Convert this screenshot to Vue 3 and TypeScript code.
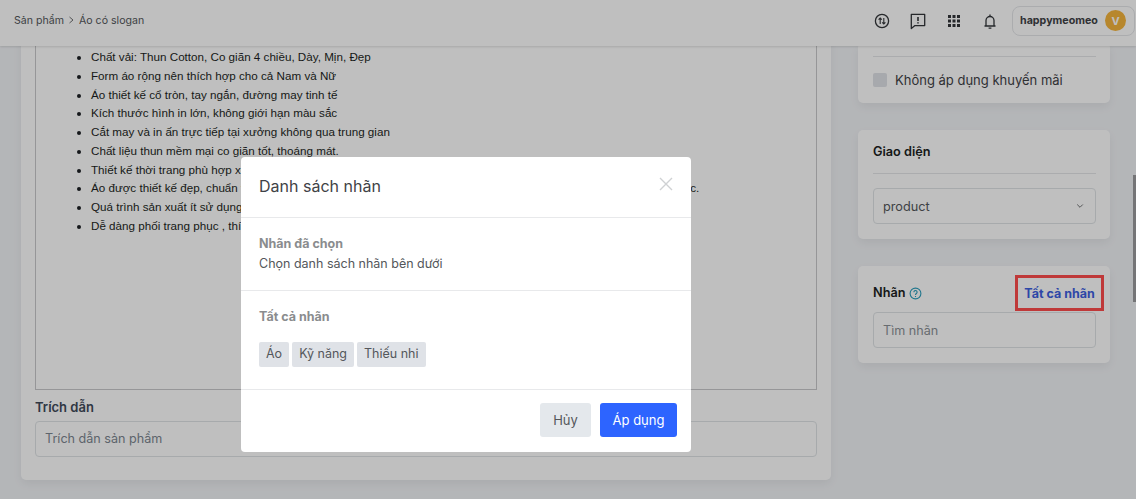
<script setup lang="ts">
const items: string[] = [
  'Chất vải: Thun Cotton, Co giãn 4 chiều, Dày, Mịn, Đẹp',
  'Form áo rộng nên thích hợp cho cả Nam và Nữ',
  'Áo thiết kế cổ tròn, tay ngắn, đường may tinh tế',
  'Kích thước hình in lớn, không giới hạn màu sắc',
  'Cắt may và in ấn trực tiếp tại xưởng không qua trung gian',
  'Chất liệu thun mềm mại co giãn tốt, thoáng mát.',
  'Thiết kế thời trang phù hợp xu hướng hiện nay',
  'Áo được thiết kế đẹp, chuẩn form, đường may tỉ mỉ, tôn dáng người mặc, và lại rất phù hợp với nhiều đối tượng khác.',
  'Quá trình sản xuất ít sử dụng hóa chất',
  'Dễ dàng phối trang phục , thích hợp đi chơi',
]
const tags: string[] = ['Áo', 'Kỹ năng', 'Thiếu nhi']
</script>

<template>
  <div class="page">
    <header class="topbar">
      <nav class="crumbs">
        <span>Sản phẩm</span>
        <svg class="sep" width="7" height="8" viewBox="0 0 7 8"><path d="M1.5 1l3.5 3-3.5 3" fill="none" stroke="#6f7173" stroke-width="1" /></svg>
        <span>Áo có slogan</span>
      </nav>
      <div class="actions">
        <svg class="ico" width="20" height="20" viewBox="0 0 20 20" fill="none" stroke="#33363a" stroke-width="1.3">
          <circle cx="10" cy="10" r="6.6" />
          <path d="M8.2 13V7.2M6.6 8.7 8.2 7l1.6 1.7M11.8 7v5.8M10.2 11.3l1.6 1.7 1.6-1.7" stroke-width="1.1" />
        </svg>
        <svg class="ico" width="20" height="20" viewBox="0 0 20 20" fill="none" stroke="#33363a" stroke-width="1.3">
          <path d="M3.3 3.4h13.4v11.2H7l-3.7 3z" stroke-linejoin="round" />
          <path d="M10 6v4M10 11.2v1.4" stroke-width="1.6" />
        </svg>
        <svg class="ico" width="20" height="20" viewBox="0 0 20 20" fill="#33363a">
          <rect x="4" y="4" width="3" height="3" /><rect x="8.5" y="4" width="3" height="3" /><rect x="13" y="4" width="3" height="3" />
          <rect x="4" y="8.5" width="3" height="3" /><rect x="8.5" y="8.5" width="3" height="3" /><rect x="13" y="8.5" width="3" height="3" />
          <rect x="4" y="13" width="3" height="3" /><rect x="8.5" y="13" width="3" height="3" /><rect x="13" y="13" width="3" height="3" />
        </svg>
        <svg class="ico bell" width="20" height="20" viewBox="0 0 20 20" fill="none" stroke="#33363a" stroke-width="1.3">
          <path d="M4.5 15h11M6 15V9.5a4 4 0 0 1 8 0V15" stroke-linejoin="round" />
          <path d="M10 3.4v2M8.6 17.2h2.8" />
        </svg>
        <div class="user">
          <span class="user-name">happymeomeo</span>
          <span class="avatar">V</span>
        </div>
      </div>
    </header>

    <main class="content">
      <section class="left">
        <div class="card main-card">
          <div class="editor">
            <ul class="desc">
              <li v-for="item in items" :key="item">{{ item }}</li>
            </ul>
          </div>
          <label class="field-label">Trích dẫn</label>
          <div class="input quote">Trích dẫn sản phẩm</div>
        </div>
      </section>

      <aside class="right">
        <div class="card side promo">
          <hr class="rule" />
          <div class="check-row">
            <span class="checkbox"></span>
            <span>Không áp dụng khuyến mãi</span>
          </div>
        </div>
        <div class="card side theme">
          <h3 class="side-title">Giao diện</h3>
          <hr class="rule rule-theme" />
          <div class="select">
            <span>product</span>
            <svg width="8" height="6" viewBox="0 0 8 6"><path d="M1.2 1.5 4 4.3l2.8-2.8" fill="none" stroke="#6f7173" stroke-width="1" /></svg>
          </div>
        </div>
        <div class="card side labels">
          <div class="labels-head">
            <h3 class="side-title">Nhãn</h3>
            <svg class="help" width="13" height="13" viewBox="0 0 13 13" fill="none" stroke="#2c9ebc" stroke-width="1.1">
              <circle cx="6.5" cy="6.5" r="5.4" />
              <path d="M4.9 5.2a1.6 1.6 0 1 1 2.5 1.3c-.6.4-.9.7-.9 1.4M6.5 9v1" />
            </svg>
            <a class="all-link">Tất cả nhãn</a>
          </div>
          <div class="input search">Tìm nhãn</div>
        </div>
      </aside>
    </main>

    <div class="scroll-thumb"></div>

    <div class="backdrop">
      <div class="modal">
        <div class="modal-head">
          <h2>Danh sách nhãn</h2>
          <svg width="14" height="14" viewBox="0 0 14 14"><path d="M1 1l12 12M13 1 1 13" stroke="#cfd1d3" stroke-width="1.4" fill="none" /></svg>
        </div>
        <div class="modal-sec selected">
          <h4>Nhãn đã chọn</h4>
          <p>Chọn danh sách nhãn bên dưới</p>
        </div>
        <div class="modal-sec all">
          <h4>Tất cả nhãn</h4>
          <div class="tags">
            <span v-for="tag in tags" :key="tag" class="tag">{{ tag }}</span>
          </div>
        </div>
        <div class="modal-foot">
          <button class="btn ghost">Hủy</button>
          <button class="btn primary">Áp dụng</button>
        </div>
      </div>
    </div>
  </div>
</template>

<style>
html, body { margin: 0; overflow: hidden; }
</style>

<style scoped>
.page {
  position: relative;
  width: 1136px;
  height: 499px;
  overflow: hidden;
  display: flex;
  flex-direction: column;
  background: #f1f3f6;
  font-family: Inter, "Noto Sans", sans-serif;
  font-size: 13px;
  color: #3f4246;
}
.topbar {
  flex: none;
  height: 46px;
  box-sizing: border-box;
  padding: 0 0 0 14px;
  display: flex;
  align-items: center;
  justify-content: space-between;
  background: #fff;
  box-shadow: 0 1px 2px rgba(0, 0, 0, .12);
  position: relative;
  z-index: 2;
}
.crumbs {
  display: flex;
  align-items: center;
  gap: 4px;
  font-size: 10.6px;
  color: #54575b;
  padding-bottom: 6px;
}
.actions {
  display: flex;
  align-items: center;
  padding-bottom: 5px;
}
.ico { margin-right: 16px; display: block; }
.bell { margin-right: 12px; }
.user {
  margin-right: 1px;
  width: 123px;
  height: 30px;
  box-sizing: border-box;
  border: 1px solid #e4e6e9;
  border-radius: 8px;
  display: flex;
  align-items: center;
  justify-content: space-between;
  padding: 0 8px 0 7px;
  font-size: 10.7px;
  font-weight: 700;
  color: #3f4246;
}
.avatar {
  width: 21px;
  height: 21px;
  border-radius: 50%;
  background: #f5b43c;
  color: #fff;
  display: flex;
  align-items: center;
  justify-content: center;
  font-size: 11px;
  font-weight: 700;
}
.content {
  flex: 1;
  min-height: 0;
  display: flex;
  overflow: hidden;
  padding: 0 26px 0 21px;
  gap: 27px;
}
.left, .right {
  display: flex;
  flex-direction: column;
  justify-content: flex-end;
}
.left { width: 810px; padding-bottom: 19px; }
.right { width: 252px; padding-bottom: 136px; gap: 27px; }
.card {
  flex: none;
  background: #fff;
  border-radius: 5px;
  box-shadow: 0 4px 10px rgba(0, 0, 0, .06);
  box-sizing: border-box;
}
.main-card { padding: 0 14px 23px; }
.editor {
  height: 380px;
  box-sizing: border-box;
  border: 1px solid #c8c9cb;
  border-top: 0;
  padding-top: 38px;
}
.desc {
  margin: 0;
  padding: 0 0 0 55px;
  font-family: "Liberation Sans", Arial, sans-serif;
  font-size: 11.65px;
  line-height: 18.75px;
  color: #1c1f23;
  white-space: nowrap;
}
.field-label {
  display: block;
  margin: 9px 0 6px;
  line-height: 16px;
  font-size: 13px;
  font-weight: 600;
  color: #3f4a5a;
}
.input {
  height: 36px;
  box-sizing: border-box;
  border: 1px solid #dfe3e6;
  border-radius: 4px;
  padding: 0 9px 0 9px;
  display: flex;
  align-items: center;
  font-size: 12.6px;
  color: #7c8690;
}
.quote { padding-bottom: 2px; }
.side { padding: 0 14px 0 15px; }
.rule { margin: 0; border: 0; border-top: 1px solid #e4e6e9; }
.promo { padding-top: 13px; padding-bottom: 15px; }
.check-row {
  display: flex;
  align-items: center;
  gap: 8px;
  margin-top: 15px;
  font-size: 13px;
  line-height: 16px;
  color: #3f4246;
}
.checkbox {
  width: 14px;
  height: 14px;
  border-radius: 2px;
  background: #dfe2e7;
}
.side-title {
  margin: 0;
  font-size: 12.7px;
  font-weight: 600;
  line-height: 16px;
  color: #1c1f23;
}
.theme { height: 109px; padding-top: 14px; }
.rule-theme { margin: 13px 0 14px; }
.select {
  height: 36px;
  box-sizing: border-box;
  border: 1px solid #dfe3e6;
  border-radius: 4px;
  padding: 0 11px 0 9px;
  display: flex;
  align-items: center;
  justify-content: space-between;
  font-size: 12.7px;
  color: #54575b;
}
.labels { height: 97px; padding-top: 19px; }
.labels-head {
  display: flex;
  align-items: center;
  height: 16px;
  margin-bottom: 11px;
}
.help { margin-left: 4px; }
.all-link {
  margin-left: auto;
  margin-right: -8px;
  box-sizing: border-box;
  height: 36px;
  width: 89px;
  display: flex;
  align-items: center;
  justify-content: center;
  border: 3px solid #ff4c4c;
  font-size: 12.5px;
  font-weight: 700;
  color: #3d5fe0;
  white-space: nowrap;
}
.search { color: #8a9096; padding-top: 1px; }
.scroll-thumb {
  position: absolute;
  right: 0;
  top: 175px;
  width: 3px;
  height: 127px;
  background: #9c9d9f;
}
.backdrop {
  position: absolute;
  inset: 0;
  z-index: 5;
  background: rgba(0, 0, 0, .25);
}
.modal {
  position: absolute;
  left: 241px;
  top: 157px;
  width: 450px;
  height: 295px;
  background: #fff;
  border-radius: 4px;
  display: flex;
  flex-direction: column;
  color: #4a4d51;
}
.modal-head {
  height: 61px;
  box-sizing: border-box;
  padding: 0 18px;
  border-bottom: 1px solid #e8e9eb;
  display: flex;
  align-items: center;
  justify-content: space-between;
}
.modal-head h2 {
  margin: 0;
  font-size: 16px;
  font-weight: 400;
  color: #3f4246;
  padding-bottom: 2px;
}
.modal-head svg { margin: -6px 0 0; }
.modal-sec { padding: 0 18px; border-bottom: 1px solid #e8e9eb; box-sizing: border-box; }
.selected { height: 73px; padding-top: 18px; }
.all { height: 99px; padding-top: 18px; }
.modal-sec h4 {
  margin: 0;
  font-size: 12.5px;
  line-height: 16px;
  font-weight: 700;
  color: #8a8c8e;
}
.modal-sec p { margin: 4px 0 0; font-size: 12.5px; line-height: 16px; color: #54575b; }
.tags { display: flex; gap: 3px; margin-top: 17px; }
.tag {
  height: 25px;
  padding: 0 7px 2px;
  box-sizing: border-box;
  display: flex;
  align-items: center;
  background: #dfe2e7;
  border-radius: 2px;
  font-size: 12.5px;
  color: #54575b;
}
.modal-foot {
  flex: 1;
  display: flex;
  justify-content: flex-end;
  align-items: flex-start;
  gap: 9px;
  padding: 13px 14px 0;
}
.btn {
  height: 34px;
  border: 0;
  border-radius: 3px;
  font-family: inherit;
  font-size: 13px;
  padding: 0;
}
.ghost { width: 51px; background: #e4e8ec; color: #54575b; }
.primary { width: 77px; background: #2d64ff; color: #fff; }
</style>
